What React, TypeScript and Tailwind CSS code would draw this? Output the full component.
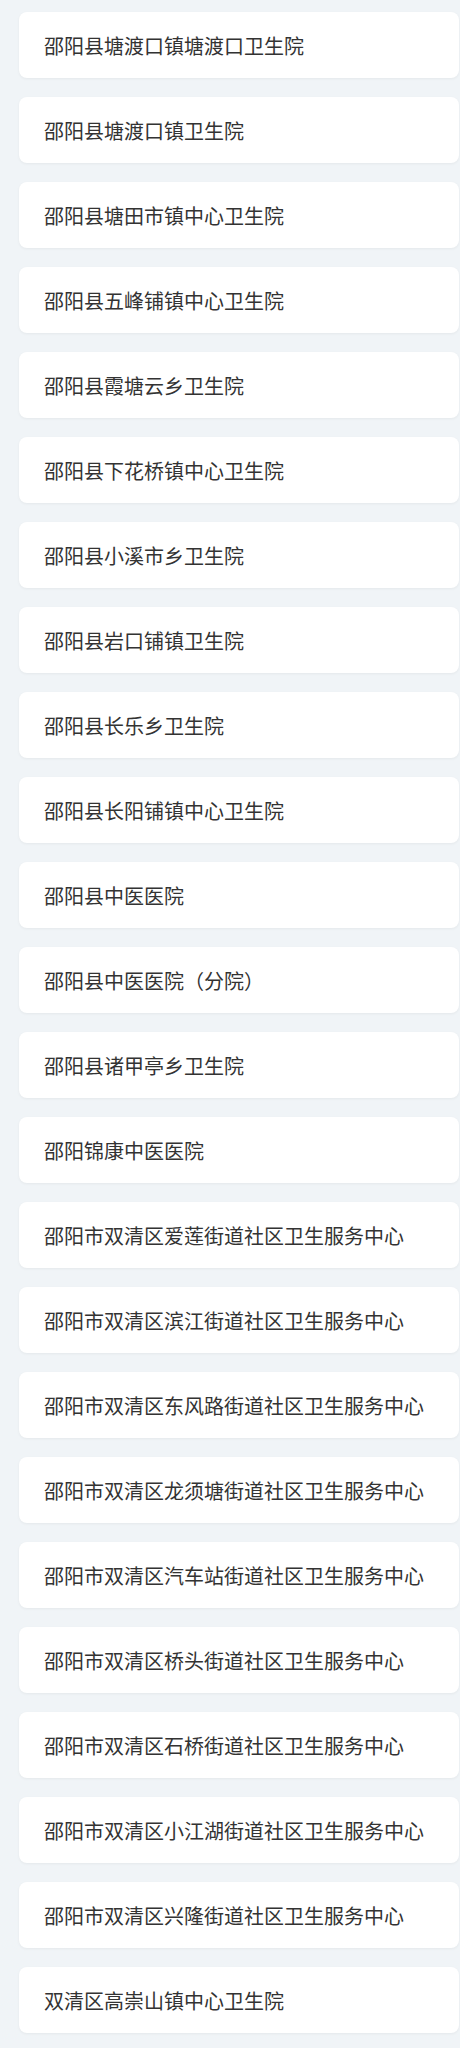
const hospitals = [
  '邵阳县塘渡口镇塘渡口卫生院',
  '邵阳县塘渡口镇卫生院',
  '邵阳县塘田市镇中心卫生院',
  '邵阳县五峰铺镇中心卫生院',
  '邵阳县霞塘云乡卫生院',
  '邵阳县下花桥镇中心卫生院',
  '邵阳县小溪市乡卫生院',
  '邵阳县岩口铺镇卫生院',
  '邵阳县长乐乡卫生院',
  '邵阳县长阳铺镇中心卫生院',
  '邵阳县中医医院',
  '邵阳县中医医院（分院）',
  '邵阳县诸甲亭乡卫生院',
  '邵阳锦康中医医院',
  '邵阳市双清区爱莲街道社区卫生服务中心',
  '邵阳市双清区滨江街道社区卫生服务中心',
  '邵阳市双清区东风路街道社区卫生服务中心',
  '邵阳市双清区龙须塘街道社区卫生服务中心',
  '邵阳市双清区汽车站街道社区卫生服务中心',
  '邵阳市双清区桥头街道社区卫生服务中心',
  '邵阳市双清区石桥街道社区卫生服务中心',
  '邵阳市双清区小江湖街道社区卫生服务中心',
  '邵阳市双清区兴隆街道社区卫生服务中心',
  '双清区高崇山镇中心卫生院',
]

export default function App() {
  return (
    <div
      className="min-h-screen bg-[#f0f4f7] pl-[19px] pr-px pt-[12px] pb-4"
      style={{ fontFamily: '"Microsoft YaHei", "Noto Sans CJK SC", sans-serif' }}
    >
      <ul className="flex flex-col gap-[19px]">
        {hospitals.map((name) => (
          <li
            key={name}
            className="h-[66px] flex items-center pl-[25px] pr-4 pt-[2px] bg-white rounded-[8px] shadow-[0_1px_3px_rgba(0,0,0,0.05)] text-[20px] leading-none text-[#333]"
          >
            {name}
          </li>
        ))}
      </ul>
    </div>
  )
}
